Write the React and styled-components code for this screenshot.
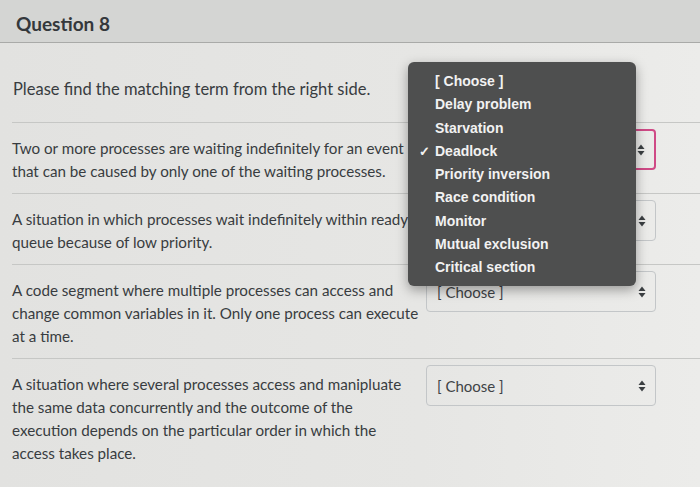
import styled, { createGlobalStyle } from 'styled-components';

const GlobalStyle = createGlobalStyle`
  html, body {
    margin: 0;
    padding: 0;
    background: #e4e4e2;
  }
  * {
    box-sizing: border-box;
  }
`;

const rows = [
  {
    lines: [
      'Two or more processes are waiting indefinitely for an event',
      'that can be caused by only one of the waiting processes.',
    ],
    active: true,
  },
  {
    lines: [
      'A situation in which processes wait indefinitely within ready',
      'queue because of low priority.',
    ],
  },
  {
    lines: [
      'A code segment where multiple processes can access and',
      'change common variables in it. Only one process can execute',
      'at a time.',
    ],
  },
  {
    lines: [
      'A situation where several processes access and manipluate',
      'the same data concurrently and the outcome of the',
      'execution depends on the particular order in which the',
      'access takes place.',
    ],
  },
];

const options = [
  '[ Choose ]',
  'Delay problem',
  'Starvation',
  'Deadlock',
  'Priority inversion',
  'Race condition',
  'Monitor',
  'Mutual exclusion',
  'Critical section',
];

function Arrows() {
  return (
    <svg width="8" height="12" viewBox="0 0 8 12">
      <path d="M4 0.5 L7.5 5 L0.5 5 Z" fill="#3b3f42" />
      <path d="M4 11.5 L7.5 7 L0.5 7 Z" fill="#3b3f42" />
    </svg>
  );
}

export default function App() {
  return (
    <Page>
      <GlobalStyle />
      <Header>
        <Title>Question 8</Title>
      </Header>
      <Body>
        <Prompt>Please find the matching term from the right side.</Prompt>
        {rows.map((row, i) => (
          <Row key={i}>
            <Term>
              {row.lines.map((l) => (
                <Line key={l}>{l}</Line>
              ))}
            </Term>
            <Select $active={row.active}>
              <span>[ Choose ]</span>
              <Arrows />
            </Select>
          </Row>
        ))}
      </Body>
      <Menu>
        {options.map((opt) => (
          <MenuItem key={opt}>
            {opt === 'Deadlock' && <Check>✓</Check>}
            {opt}
          </MenuItem>
        ))}
      </Menu>
    </Page>
  );
}

const Page = styled.div`
  position: relative;
  width: 700px;
  height: 487px;
  overflow: hidden;
  font-family: Lato, 'Open Sans', sans-serif;
  color: #383c40;
  background: linear-gradient(90deg, #e2e2e0 0%, #e6e6e4 60%, #ececea 100%);
`;

const Header = styled.div`
  height: 43px;
  background: #d4d5d3;
  border-bottom: 1px solid #a9aaa8;
  display: flex;
  align-items: center;
  padding-left: 16px;
`;

const Title = styled.h2`
  margin: 0;
  font-size: 19px;
  font-weight: 700;
  color: #34383c;
  padding-top: 5px;
`;

const Body = styled.div`
  padding-left: 12px;
  display: flex;
  flex-direction: column;
`;

const Prompt = styled.div`
  height: 79px;
  font-size: 16.5px;
  padding: 36px 0 0 1px;
`;

const Row = styled.div`
  display: flex;
  align-items: flex-start;
  border-top: 1px solid #c6c7c5;
  padding: 14px 0 10px;
`;

const Term = styled.div`
  width: 414px;
  font-size: 15.2px;
  line-height: 23px;
`;

const Line = styled.div`
  white-space: nowrap;
`;

const Select = styled.div`
  margin-top: -8px;
  width: 230px;
  height: 41px;
  display: flex;
  align-items: center;
  justify-content: space-between;
  padding: 0 9px 0 10px;
  background: transparent;
  border: ${(p) => (p.$active ? '2px solid #cf4a86' : '1px solid #c3c6c8')};
  border-radius: 4px;
  font-size: 15px;
  color: #3f4346;
`;

const Menu = styled.div`
  position: absolute;
  left: 408px;
  top: 62px;
  width: 228px;
  height: 224px;
  padding: 8px 0;
  background: #4e4f4f;
  border-radius: 6px;
  box-shadow: 0 4px 12px rgba(0, 0, 0, 0.35);
  font-family: 'Liberation Sans', Arial, sans-serif;
`;

const MenuItem = styled.div`
  position: relative;
  height: 23.3px;
  line-height: 23.3px;
  padding-left: 27px;
  font-size: 14px;
  font-weight: 700;
  color: #f2f2f2;
`;

const Check = styled.span`
  position: absolute;
  left: 11px;
  font-size: 13px;
`;
